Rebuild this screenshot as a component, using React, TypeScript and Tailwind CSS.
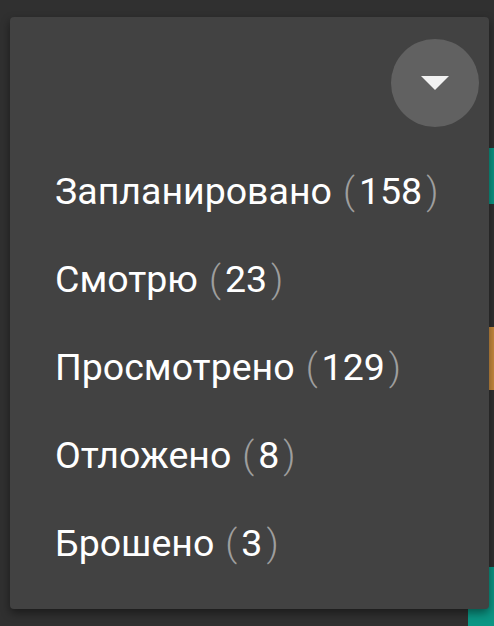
import React from "react";

const items: [string, string][] = [
  ["Запланировано", "158"],
  ["Смотрю", "23"],
  ["Просмотрено", "129"],
  ["Отложено", "8"],
  ["Брошено", "3"],
];

export default function App() {
  return (
    <div className="relative w-[494px] h-[626px] bg-[#303030] overflow-hidden" style={{ fontFamily: "Roboto, 'Noto Sans', sans-serif" }}>
      <div className="absolute right-0 top-[148px] w-[6px] h-[56px] bg-[#0b9684]" />
      <div className="absolute right-0 top-[327px] w-[6px] h-[63px] bg-[#c88b3f]" />
      <div className="absolute right-0 top-[567px] w-[26px] h-[59px] bg-[#0b9684]" />
      <div className="absolute left-[10px] top-[17px] w-[479px] h-[592px] bg-[#424242] rounded-[4px] shadow-[0_4px_10px_rgba(0,0,0,0.45)] flex flex-col">
        <div className="flex justify-end pt-[22px] pr-[10px]">
          <button className="w-[88px] h-[88px] rounded-full bg-[#616161] flex items-center justify-center">
            <svg width="28" height="14" viewBox="0 0 28 14">
              <path d="M0 0 L28 0 L14 14 Z" fill="#f2f2f2" />
            </svg>
          </button>
        </div>
        <div className="flex flex-col mt-[21px] pl-[45px]">
          {items.map(([label, n]) => (
            <div key={label} className="h-[88px] flex items-center text-[37.5px] text-white leading-none">
              <span>{label}</span>
              <span className="ml-[11px] font-light text-[#9e9e9e]">(</span>
              <span className="mx-[4px]">{n}</span>
              <span className="font-light text-[#9e9e9e]">)</span>
            </div>
          ))}
        </div>
      </div>
    </div>
  );
}
